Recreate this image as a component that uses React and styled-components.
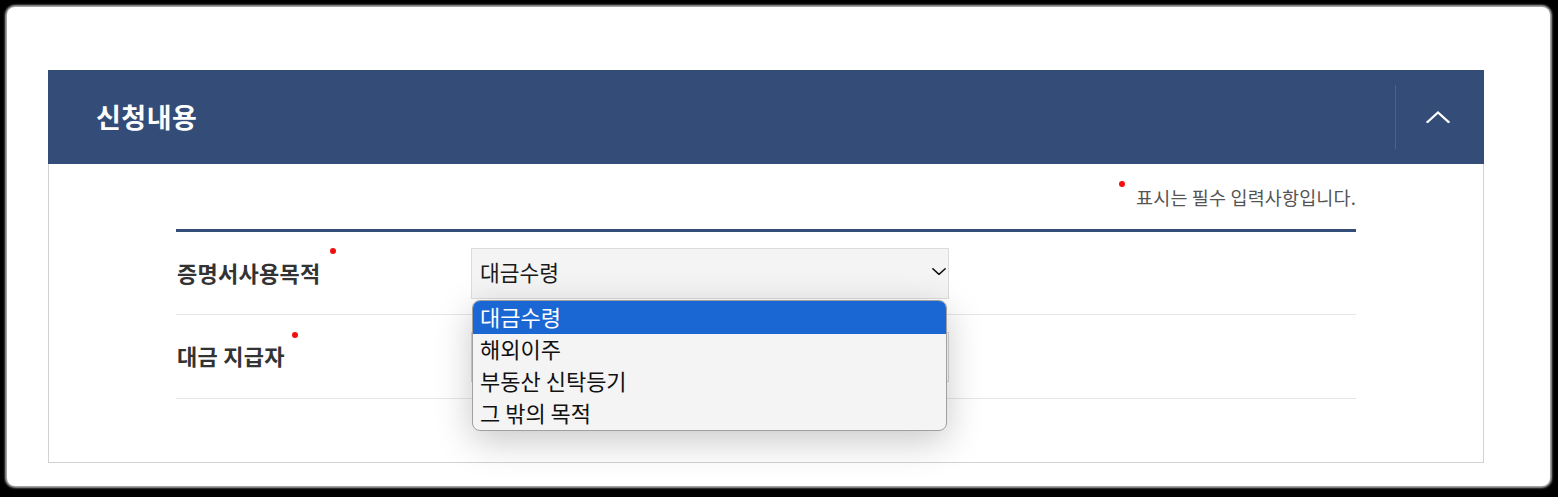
import styled, { createGlobalStyle } from 'styled-components';

const GlobalStyle = createGlobalStyle`
  html, body {
    margin: 0;
    padding: 0;
    background: #000;
  }
  body {
    font-family: 'Noto Sans CJK KR', 'Noto Sans', sans-serif;
    color: #333;
  }
`;

// Frame
const Frame = styled.div`
  width: 1558px;
  height: 497px;
  box-sizing: border-box;
  padding: 7px 8px 11px 7px;
  background: #000;
`;

const Sheet = styled.div`
  height: 100%;
  background: #fff;
  border-radius: 8px;
  box-shadow: 0 0 2px 2px rgba(190, 190, 190, 0.9);
  padding: 63px 0 0 41px;
  box-sizing: border-box;
`;

// Panel
const Panel = styled.section`
  width: 1436px;
`;

const PanelHeader = styled.header`
  height: 94px;
  background: #344d78;
  display: flex;
  align-items: center;
  justify-content: space-between;
`;

const PanelTitle = styled.h2`
  margin: 0 0 2px 48px;
  font-size: 27px;
  font-weight: 700;
  color: #fff;
  letter-spacing: 0.5px;
`;

const ToggleButton = styled.button`
  width: 89px;
  height: 64px;
  background: none;
  border: none;
  border-left: 1px solid #4a628c;
  display: flex;
  align-items: center;
  justify-content: center;
  padding: 0 4px 0 0;
  cursor: pointer;
`;

const PanelBody = styled.div`
  border: 1px solid #d2d2d2;
  border-top: none;
  height: 299px;
  box-sizing: border-box;
  padding: 0 127px 0 127px;
`;

const Note = styled.p`
  margin: 0;
  height: 65px;
  display: flex;
  justify-content: flex-end;
  align-items: center;
  font-size: 18.5px;
  color: #555;
  letter-spacing: 0.15px;
`;

const Dot = styled.span`
  width: 6px;
  height: 6px;
  border-radius: 50%;
  background: #f01010;
  display: inline-block;
  align-self: flex-start;
  margin-top: ${p => p.$top}px;
  margin-left: ${p => p.$left || 0}px;
  margin-right: ${p => p.$right || 0}px;
`;

// Form table
const FormTable = styled.div`
  border-top: 3px solid #344d78;
`;

const Row = styled.div`
  display: grid;
  grid-template-columns: 295px 1fr;
  align-items: center;
  height: ${p => p.$h}px;
  border-bottom: 1px solid #e6e6e6;
`;

const Label = styled.div`
  display: flex;
  align-items: center;
  height: 100%;
  font-size: 22px;
  font-weight: 700;
  color: #333;
  letter-spacing: 0.25px;
  padding-left: 1px;
`;

const LabelText = styled.span`
  padding-bottom: 3px;
`;

const Field = styled.div`
  position: relative;
  width: 478px;
`;

const SelectBox = styled.div`
  height: 51px;
  box-sizing: border-box;
  border: 1px solid #dcdcdc;
  background: #f4f4f4;
  display: flex;
  align-items: center;
  justify-content: space-between;
  padding: 0 2px 3px 8px;
  font-size: 21.5px;
  color: #1a1a1a;
`;

const InputBox = styled.div`
  height: 50px;
  box-sizing: border-box;
  border: 1px solid #d6d6d6;
  background: #fff;
`;

const Dropdown = styled.ul`
  position: absolute;
  top: 52px;
  left: 1px;
  width: 475px;
  margin: 0;
  padding: 0;
  list-style: none;
  box-sizing: border-box;
  border: 1.5px solid #a0a0a0;
  border-radius: 8px;
  background: #f4f4f4;
  overflow: hidden;
  box-shadow: 0 10px 36px rgba(0, 0, 0, 0.22);
  z-index: 10;
`;

const Option = styled.li`
  height: ${p => p.$h || 32}px;
  box-sizing: border-box;
  display: flex;
  align-items: center;
  padding: 0 0 3px 7px;
  font-size: 22px;
  color: ${p => (p.$active ? '#fff' : '#111')};
  background: ${p => (p.$active ? '#1a67d3' : 'transparent')};
`;

const Chevron = ({ dir = 'up', size = 24, color = '#fff', sw = 2.2 }) => (
  <svg width={size} height={size / 2} viewBox="0 0 24 12" fill="none">
    <path
      d={dir === 'up' ? 'M1.5 11 L12 1.5 L22.5 11' : 'M1.5 1.5 L12 11 L22.5 1.5'}
      stroke={color}
      strokeWidth={sw}
      strokeLinecap="square"
    />
  </svg>
);

const OPTIONS = ['대금수령', '해외이주', '부동산 신탁등기', '그 밖의 목적'];

export default function App() {
  return (
    <>
      <GlobalStyle />
      <Frame>
        <Sheet>
          <Panel>
            <PanelHeader>
              <PanelTitle>신청내용</PanelTitle>
              <ToggleButton aria-label="접기">
                <Chevron dir="up" size={24} />
              </ToggleButton>
            </PanelHeader>
            <PanelBody>
              <Note>
                <Dot $top={17} $right={11} />
                표시는 필수 입력사항입니다.
              </Note>
              <FormTable>
                <Row $h={82}>
                  <Label>
                    <LabelText>증명서사용목적</LabelText>
                    <Dot $top={16} $left={10} />
                  </Label>
                  <Field>
                    <SelectBox>
                      대금수령
                      <Chevron dir="down" size={14} color="#111" sw={2.6} />
                    </SelectBox>
                    <Dropdown>
                      {OPTIONS.map((o, i) => (
                        <Option key={o} $active={i === 0} $h={i === 0 ? 33 : 32}>
                          {o}
                        </Option>
                      ))}
                    </Dropdown>
                  </Field>
                </Row>
                <Row $h={83}>
                  <Label>
                    <LabelText>대금 지급자</LabelText>
                    <Dot $top={17} $left={7} />
                  </Label>
                  <Field>
                    <InputBox />
                  </Field>
                </Row>
              </FormTable>
            </PanelBody>
          </Panel>
        </Sheet>
      </Frame>
    </>
  );
}
